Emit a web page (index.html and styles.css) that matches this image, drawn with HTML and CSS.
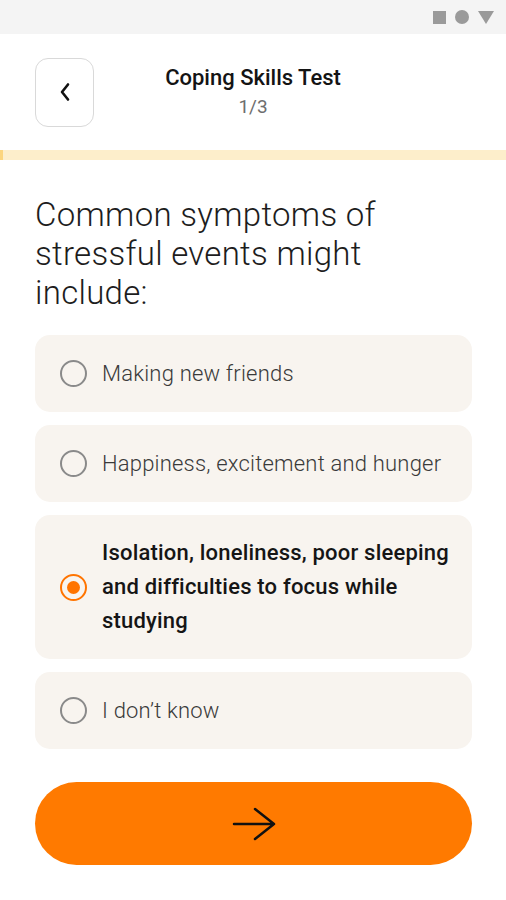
FILE: index.html
```html
<!DOCTYPE html>
<html lang="en">
<head>
<meta charset="utf-8">
<link rel="stylesheet" href="styles.css">
</head>
<body>
<div class="statusbar">
  <span class="sq"></span><span class="dot"></span>
  <svg class="tri" width="16" height="13" viewBox="0 0 16 13"><path d="M0 0H16L8 13Z" fill="#9a9a9a"/></svg>
</div>
<header class="header">
  <button class="back">
    <svg width="14" height="20" viewBox="0 0 14 20"><path d="M10 2.5L4 10L10 17.5" fill="none" stroke="#111" stroke-width="2.6" stroke-linecap="round" stroke-linejoin="round"/></svg>
  </button>
  <div class="titles">
    <div class="title">Coping Skills Test</div>
    <div class="step">1/3</div>
  </div>
</header>
<div class="progress"><div class="fill"></div></div>
<main class="content">
  <h1 class="question">Common symptoms of stressful events might include:</h1>
  <div class="options">
    <div class="option"><span class="radio"></span><span class="label">Making new friends</span></div>
    <div class="option"><span class="radio"></span><span class="label">Happiness, excitement and hunger</span></div>
    <div class="option selected"><span class="radio"></span><span class="label">Isolation, loneliness, poor sleeping and difficulties to focus while studying</span></div>
    <div class="option"><span class="radio"></span><span class="label">I don’t know</span></div>
  </div>
  <button class="next">
    <svg width="44" height="34" viewBox="0 0 44 34"><path d="M2 17H42M23 2L42 17L23 32" fill="none" stroke="#111" stroke-width="2.5" stroke-linecap="round" stroke-linejoin="round"/></svg>
  </button>
</main>
</body>
</html>
```
FILE: styles.css
```css
* { box-sizing: border-box; }
html, body { margin: 0; padding: 0; background: #fff; }
body { font-family: Roboto, "Noto Sans", sans-serif; color: #1a1a1a; width: 506px; }

.statusbar {
  height: 34px;
  background: #f4f4f4;
  display: flex;
  align-items: center;
  justify-content: flex-end;
  gap: 9px;
  padding-right: 12px;
}
.statusbar .sq { width: 13px; height: 13px; background: #9a9a9a; display: block; }
.statusbar .dot { width: 14px; height: 14px; border-radius: 50%; background: #9a9a9a; display: block; }
.statusbar .tri { display: block; }

.header {
  height: 116px;
  display: flex;
  align-items: center;
  padding: 0 35px;
  position: relative;
}
.back {
  width: 59px;
  height: 69px;
  border: 1px solid #d9d9d9;
  border-radius: 13px;
  background: #fff;
  display: flex;
  align-items: center;
  justify-content: center;
  padding: 0;
}
.titles {
  position: absolute;
  left: 0; right: 0; top: 29px;
  text-align: center;
  pointer-events: none;
}
.title { font-size: 22px; font-weight: 500; color: #141414; line-height: 30px; }
.step { font-size: 19px; color: #6e6e6e; line-height: 28px; }

.progress { height: 10px; background: #fdeecb; }
.progress .fill { width: 3px; height: 100%; background: #fcd57e; }

.content { padding: 35px 34px 0 35px; }
.question {
  margin: 0 0 23px;
  font-size: 33px;
  font-weight: 300;
  line-height: 39px;
  color: #1d1d1d;
  letter-spacing: 0.3px;
}
.options { display: flex; flex-direction: column; gap: 13px; }
.option {
  background: #f8f4ef;
  border-radius: 15px;
  min-height: 77px;
  display: flex;
  align-items: center;
  gap: 15px;
  padding: 20px 12px 20px 25px;
}
.radio {
  flex: none;
  width: 27px;
  height: 27px;
  border-radius: 50%;
  border: 2.5px solid #8a8a8a;
  display: flex;
  align-items: center;
  justify-content: center;
}
.label { font-size: 22px; font-weight: 300; color: #3a3a3a; line-height: 34px; letter-spacing: 0.2px; }
.option.selected { padding-top: 21px; padding-bottom: 21px; }
.option.selected .radio { border-color: #ff7400; }
.option.selected .radio::after {
  content: "";
  width: 13px; height: 13px; border-radius: 50%; background: #ff7400;
}
.option.selected .label { font-weight: 500; color: #151515; }

.next {
  margin-top: 33px;
  width: 100%;
  height: 83px;
  border: none;
  border-radius: 42px;
  background: #ff7a00;
  display: flex;
  align-items: center;
  justify-content: center;
  padding: 0;
}
```
